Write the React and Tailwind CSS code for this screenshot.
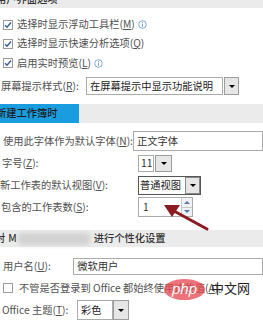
import React from 'react';

function Check({ checked }) {
  return (
    <span className="w-[10px] h-[10px] border border-[#9a9a9a] bg-white flex items-center justify-center shrink-0">
      {checked && (
        <svg width="8" height="8" viewBox="0 0 8 8">
          <path d="M1 4.2 L3 6.2 L7 1.5" fill="none" stroke="#2f5f9e" strokeWidth="1.4" />
        </svg>
      )}
    </span>
  );
}

function Info() {
  return (
    <svg width="9" height="9" viewBox="0 0 9 9" className="ml-[3px]">
      <circle cx="4.5" cy="4.5" r="3.8" fill="none" stroke="#6f9fd8" strokeWidth="0.9" />
      <rect x="4" y="3.8" width="1" height="3" fill="#6f9fd8" />
      <rect x="4" y="2.2" width="1" height="1" fill="#6f9fd8" />
    </svg>
  );
}

function DropBtn({ className = '' }) {
  return (
    <span className={`w-[15px] bg-[#e6e6e6] border border-[#9c9c9c] flex items-center justify-center ${className}`}>
      <span className="w-0 h-0 border-l-[3px] border-r-[3px] border-t-[3px] border-l-transparent border-r-transparent border-t-black" />
    </span>
  );
}

function K({ children }) {
  return <span className="underline underline-offset-1">{children}</span>;
}

export default function App() {
  return (
    <div className="relative w-[263px] h-[322px] overflow-hidden bg-white text-[10.25px] text-[#505050] font-['Noto_Sans_CJK_SC','Microsoft_YaHei',sans-serif] leading-none whitespace-nowrap">
      {/* top section header (cut off) */}
      <div className="h-[8px] bg-[#ebebeb] overflow-hidden">
        <div className="-mt-[6px] -ml-[4px] font-medium text-[#333]">用户界面选项</div>
      </div>

      <div className="h-[7px]" />
      <div className="h-[19px] flex items-center pl-[3px]">
        <Check checked />
        <span className="ml-[4px]">选择时显示浮动工具栏(<K>M</K>)</span>
        <Info />
      </div>
      <div className="h-[19px] flex items-center pl-[3px]">
        <Check checked />
        <span className="ml-[4px]">选择时显示快速分析选项(<K>Q</K>)</span>
      </div>
      <div className="h-[20px] flex items-center pl-[3px]">
        <Check checked />
        <span className="ml-[4px]">启用实时预览(<K>L</K>)</span>
        <Info />
      </div>
      <div className="h-[4px]" />
      <div className="h-[18px] flex items-stretch">
        <span className="w-[86px] flex items-center pl-[1px]">屏幕提示样式(<K>R</K>):</span>
        <span className="w-[137px] border border-[#ababab] flex items-center pl-[3px] text-[#222]">在屏幕提示中显示功能说明</span>
        <DropBtn className="ml-[1px]" />
      </div>

      <div className="h-[9px]" />
      <div className="h-[19px] flex bg-[#ebebeb]">
        <div className="w-[79px] bg-[#1a9ddf] flex items-center overflow-hidden">
          <span className="-ml-[4px] font-medium text-[#1a1a1a]">新建工作簿时</span>
        </div>
      </div>

      <div className="h-[8px]" />
      <div className="h-[20px] flex items-stretch">
        <span className="w-[138px] flex items-center pl-[3px]">使用此字体作为默认字体(<K>N</K>):</span>
        <span className="w-[140px] border border-[#ababab] flex items-center pl-[3px] text-[#333]">正文字体</span>
      </div>
      <div className="h-[4px]" />
      <div className="h-[17px] flex items-stretch">
        <span className="w-[138px] flex items-center pl-[2px]">字号(<K>Z</K>):</span>
        <span className="w-[16px] border border-[#ababab] flex items-center pl-[2px] text-[#333]">11</span>
        <DropBtn className="ml-[1px] w-[17px]" />
      </div>
      <div className="h-[4px]" />
      <div className="h-[19px] flex items-stretch">
        <span className="w-[138px] flex items-center">新工作表的默认视图(<K>V</K>):</span>
        <span className="flex border border-[#555]">
          <span className="w-[46px] flex items-center pl-[1px] text-[#222]">普通视图</span>
          <DropBtn className="w-[15px] border-[#888]" />
        </span>
      </div>
      <div className="h-[2px]" />
      <div className="h-[20px] flex items-stretch">
        <span className="w-[138px] flex items-center pl-[1px]">包含的工作表数(<K>S</K>):</span>
        <span className="w-[55px] border border-[#ababab] flex">
          <span className="flex-1 flex items-center pl-[4px] text-[#333]">1</span>
          <span className="w-[11px] flex flex-col border-l border-[#c8c8c8]">
            <span className="flex-1 flex items-center justify-center bg-[#eef2f7] border-b border-[#c8c8c8]">
              <span className="w-0 h-0 border-l-[3px] border-r-[3px] border-b-[3px] border-l-transparent border-r-transparent border-b-[#5577aa]" />
            </span>
            <span className="flex-1 flex items-center justify-center bg-[#eef2f7]">
              <span className="w-0 h-0 border-l-[3px] border-r-[3px] border-t-[3px] border-l-transparent border-r-transparent border-t-[#5577aa]" />
            </span>
          </span>
        </span>
      </div>

      <div className="h-[13px]" />
      <div className="h-[17px] flex items-center bg-[#ebebeb] font-medium text-[#333]">
        <span className="-ml-[5px]">对</span>
        <span className="ml-[3px]">M</span>
        <span className="w-[72px] h-[12px] ml-[1px] bg-[#d2d2d2] blur-[2px] rounded-sm" />
        <span className="ml-[4px]">进行个性化设置</span>
      </div>

      <div className="h-[11px]" />
      <div className="h-[17px] flex items-stretch">
        <span className="w-[77px] flex items-center pl-[3px]">用户名(<K>U</K>):</span>
        <span className="w-[200px] border border-[#ababab] flex items-center pl-[3px] text-[#333]">微软用户</span>
      </div>
      <div className="h-[3px]" />
      <div className="h-[20px] flex items-center pl-[3px]">
        <Check />
        <span className="ml-[6px]">不管是否登录到 Office 都始终使用这些值(<K>A</K>)。</span>
      </div>
      <div className="h-[2px]" />
      <div className="h-[20px] flex items-stretch">
        <span className="w-[77px] flex items-center pl-[2px]">Office 主题(<K>T</K>):</span>
        <span className="w-[36px] border border-[#ababab] flex items-center pl-[3px] text-[#222]">彩色</span>
        <DropBtn className="w-[16px]" />
      </div>

      {/* red arrow annotation */}
      <svg className="absolute left-0 top-0" width="263" height="322" viewBox="0 0 263 322">
        <line x1="207" y1="229" x2="174" y2="211" stroke="#8b1a22" strokeWidth="3" strokeLinecap="round" />
        <polygon points="164,205 180,205 172,217" fill="#8b1a22" />
      </svg>

      {/* watermark */}
      <div className="absolute left-[164px] top-[279px] w-[41px] h-[21px] rounded-[50%] bg-[#e8454f]/75 flex items-center justify-center">
        <span className="text-white text-[15px] italic font-['Liberation_Sans',sans-serif] -mt-[2px]">php</span>
      </div>
      <div className="absolute left-[211px] top-[281px] text-[13px] text-[#222] font-['Noto_Sans_CJK_SC',sans-serif]">中文网</div>
    </div>
  );
}
